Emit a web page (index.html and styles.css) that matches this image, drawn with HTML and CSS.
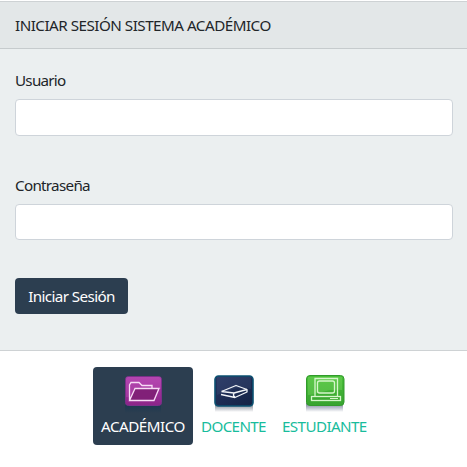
FILE: index.html
```html
<!DOCTYPE html>
<html lang="es">
<head>
    <meta charset="UTF-8">
    <meta name="viewport" content="width=device-width, initial-scale=1.0">
    <title>Sistema Académico</title>
    <link rel="stylesheet" href="styles.css">
</head>
<body>

    <div class="card">
        <div class="card-header">INICIAR SESIÓN SISTEMA ACADÉMICO</div>
        <form class="card-body">
            <div class="form-group">
                <label class="label-usuario" for="usuario">Usuario</label>
                <input type="text" id="usuario" class="form-control">
            </div>
            <div class="form-group">
                <label class="label-clave" for="clave">Contraseña</label>
                <input type="password" id="clave" class="form-control control-clave">
            </div>
            <button type="button" class="btn">Iniciar Sesión</button>
        </form>
    </div>

    <!-- Tipo de usuario -->
    <nav class="nav">
        <a class="nav-link active" href="#">
            <svg class="icon" width="42" height="42" viewBox="0 0 42 42">
                <defs>
                    <linearGradient id="morado" x1="0" y1="0" x2="0" y2="1">
                        <stop offset="0" stop-color="#ad3caa"/>
                        <stop offset="1" stop-color="#8c2488"/>
                    </linearGradient>
                    <linearGradient id="sombra1" x1="0" y1="0" x2="0" y2="1">
                        <stop offset="0" stop-color="#1d3850"/>
                        <stop offset="1" stop-color="#2c3e50"/>
                    </linearGradient>
                </defs>
                <rect x="3" y="33" width="36" height="8" fill="url(#sombra1)"/>
                <rect x="3.500" y="4.500" width="36" height="29" rx="3" fill="url(#morado)" stroke="#7b3089"/>
                <path d="M4 5H39V17Q28 16 20 21T4 25Z" fill="#d064c8" opacity=".25"/>
                <path d="M12 17H36L31 28H8Z" fill="#812078"/>
                <path d="M7.500 28V13L9 10.500H17L20 13.500H30V16.500M7.500 28.500L13 16.500H37L32 28.500Z" fill="none" stroke="#f7dcf5" stroke-width="1.300"/>
            </svg>
            <span class="txt-academico">ACADÉMICO</span>
        </a>
        <a class="nav-link" href="#">
            <svg class="icon" width="42" height="42" viewBox="0 0 42 42">
                <defs>
                    <linearGradient id="azul" x1="0" y1="0" x2="1" y2="1">
                        <stop offset="0" stop-color="#263461"/>
                        <stop offset="1" stop-color="#142345"/>
                    </linearGradient>
                    <linearGradient id="sombra2" x1="0" y1="0" x2="0" y2="1">
                        <stop offset="0" stop-color="#687080"/>
                        <stop offset=".4" stop-color="#a6abb4"/>
                        <stop offset="1" stop-color="#fff"/>
                    </linearGradient>
                </defs>
                <rect x="2" y="31" width="38" height="9" fill="url(#sombra2)"/>
                <rect x="2" y="4" width="38" height="30" rx="3.500" fill="url(#azul)" stroke="#0c5272" stroke-width="1.600"/>
                <path d="M4 5H38V17Q27 14 17 18T4 23Z" fill="#53638b" opacity=".22"/>
                <path d="M8.500 19.500L23 13.500L34 17.500V20L22 25.500L8 22.500M8.500 19.500L21 21L34 17.500M21 21Q19.500 23.500 22 25.500" fill="none" stroke="#f2f4f8" stroke-width="1.300" stroke-linejoin="round"/>
            </svg>
            <span class="txt-docente">DOCENTE</span>
        </a>
        <a class="nav-link" href="#">
            <svg class="icon" width="42" height="42" viewBox="0 0 42 42">
                <defs>
                    <linearGradient id="verde" x1="0" y1="0" x2="0" y2="1">
                        <stop offset="0" stop-color="#48bf38"/>
                        <stop offset="1" stop-color="#38a330"/>
                    </linearGradient>
                    <linearGradient id="sombra3" x1="0" y1="0" x2="0" y2="1">
                        <stop offset="0" stop-color="#737c90"/>
                        <stop offset=".4" stop-color="#abb0c0"/>
                        <stop offset="1" stop-color="#fff"/>
                    </linearGradient>
                </defs>
                <rect x="2" y="31" width="37" height="9" fill="url(#sombra3)"/>
                <rect x="2.500" y="3.500" width="37.500" height="30" rx="3.500" fill="url(#verde)" stroke="#329a2c"/>
                <path d="M4 5H38V18Q27 17 18 20T4 23Z" fill="#8ce070" opacity=".3"/>
                <g fill="none" stroke="#d6f6cb" stroke-width="1.300">
                    <path d="M11 24.500V6.500H33.500V24.500"/>
                    <rect x="13.500" y="9" width="17" height="12" rx="2"/>
                    <rect x="7.500" y="24.500" width="29" height="4"/>
                    <path d="M26 26.500H34" stroke-width="1"/>
                </g>
            </svg>
            <span class="txt-estudiante">ESTUDIANTE</span>
        </a>
    </nav>

</body>
</html>
```

FILE: styles.css
```css
* {
    box-sizing: border-box;
}

body {
    margin: 0;
    padding-top: 1px;
    font-family: "Noto Sans", "Open Sans", sans-serif;
    font-size: 15.2px;
    line-height: 24px;
    color: #212529;
    background-color: #fff;
    overflow: hidden;
}

.card {
    height: 350px;
    background-color: #ebeff0;
    border-top: 1px solid #ced2d4;
    border-bottom: 1px solid #ced2d4;
}

.card-header {
    height: 47px;
    padding: 11px 15px;
    background-color: #e3e7e8;
    border-bottom: 1px solid #c6cbcd;
    letter-spacing: -0.5px;
}

.card-body {
    padding: 19px 14px 0 15px;
}

.form-group {
    height: 105px;
}

label {
    display: block;
    margin-bottom: 7px;
}

.label-usuario {
    letter-spacing: -0.75px;
}

.label-clave {
    letter-spacing: -0.7px;
}

.form-control {
    display: block;
    width: 100%;
    height: 37px;
    border: 1px solid #ced4da;
    border-radius: 4px;
    background-color: #fff;
}

.control-clave {
    height: 36px;
}

.btn {
    display: block;
    width: 113px;
    height: 36px;
    padding: 0;
    border: none;
    border-radius: 4px;
    background-color: #2c3e50;
    color: #fff;
    font: inherit;
    letter-spacing: -0.6px;
    cursor: pointer;
}

.nav {
    display: flex;
    justify-content: center;
    padding: 16px 0 0 1px;
}

.nav-link {
    display: flex;
    flex-direction: column;
    align-items: center;
    height: 78px;
    padding: 5px 8px 0;
    border-radius: 4px;
    color: #18bc9c;
    text-decoration: none;
    white-space: nowrap;
}

.nav-link.active {
    background-color: #2c3e50;
    color: #fff;
}

.icon {
    display: block;
    flex: none;
}

.txt-academico {
    width: 84px;
    letter-spacing: -0.5px;
}

.txt-docente {
    width: 65px;
    letter-spacing: -0.65px;
}

.txt-estudiante {
    width: 85px;
    letter-spacing: -0.6px;
}
```
